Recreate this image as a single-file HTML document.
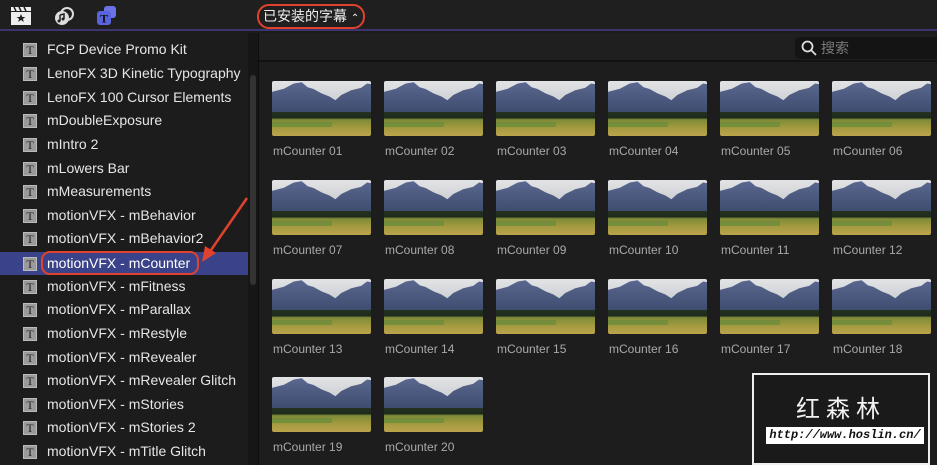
<!DOCTYPE html>
<html><head><meta charset="utf-8"><style>
*{margin:0;padding:0;box-sizing:border-box}
body{width:937px;height:465px;background:#1c1c1c;overflow:hidden;position:relative;font-family:"Liberation Sans","Noto Sans CJK SC",sans-serif}
.top{position:absolute;left:0;top:0;width:937px;height:31px;background:#1f1f1f;border-bottom:2px solid #3b3470}
.side{position:absolute;left:0;top:33px;width:248px;height:432px;background:#1c1c1c}
.sb{position:absolute;left:248px;top:33px;width:11px;height:432px;background:#161616;border-right:1px solid #0e0e0e}
.main{position:absolute;left:259px;top:33px;right:0;bottom:0;background:#1d1d1d}
.sstrip{position:absolute;left:259px;top:33px;right:0;height:29px;background:#1f1f1f;border-bottom:2px solid #111}
.search{position:absolute;left:795px;top:37px;width:150px;height:22px;background:#141414;border-radius:5px;color:#7a7a7a;font-size:14px;line-height:22px;padding-left:26px}
.row{position:absolute;left:0;width:248px;height:23.6px;color:#e6e6e6;font-size:14px;line-height:23.6px}
.row .ic{position:absolute;left:23px;top:5px;width:14px;height:14px;background:#9a9a9a;border:1px solid #bbb;color:#222;font-family:"Liberation Serif",serif;font-style:normal;font-size:12px;line-height:12px;text-align:center}
.row span{position:absolute;left:47px}
.sel{background:#3a4389}
.t{position:absolute;width:99px;height:55px;border-radius:2px;overflow:hidden;background:linear-gradient(#e2e3e5 0%,#c9ccd0 45%,#25321f 56%,#1f2a1d 67%,#7d8a38 70%,#a49a40 85%,#bba44c 100%)}
.t:before{content:"";position:absolute;left:0;top:0;width:99px;height:31px;background:linear-gradient(#5b6890,#3f4d70);clip-path:polygon(0 35%,12% 25%,22% 8%,30% 4%,36% 20%,42% 26%,50% 40%,58% 50%,64% 62%,70% 45%,80% 30%,90% 22%,96% 8%,100% 10%,100% 100%,0 100%)}
.t:after{content:"";position:absolute;left:0;top:41px;width:60px;height:5px;background:#5e8a3a;opacity:.6}
.l{position:absolute;color:#a9a9a9;font-size:12px}
.wm{position:absolute;left:752px;top:373px;width:178px;height:92px;background:#1a1a1a;border:2px solid #eee}
</style></head><body>
<div class="top">
<svg style="position:absolute;left:10px;top:6px" width="22" height="20" viewBox="0 0 22 20"><rect x="1" y="6" width="20" height="13" fill="#eee"/><path d="M1 1h20v4H1z" fill="#eee"/><path d="M4 1l2 4M9 1l2 4M14 1l2 4" stroke="#222" stroke-width="1.5"/><path d="M11 8l1.3 3h3l-2.4 2 1 3-2.9-2-2.9 2 1-3-2.4-2h3z" fill="#222"/></svg>
<svg style="position:absolute;left:53px;top:6px" width="22" height="20" viewBox="0 0 22 20"><circle cx="9" cy="12" r="7" fill="#ddd"/><circle cx="14" cy="8" r="6" fill="none" stroke="#ddd" stroke-width="2"/><path d="M7 9v6M7 9l4-1v5" stroke="#222" stroke-width="1.5" fill="none"/><circle cx="6" cy="15" r="1.5" fill="#222"/><circle cx="10" cy="13" r="1.5" fill="#222"/></svg>
<svg style="position:absolute;left:96px;top:5px" width="22" height="22" viewBox="0 0 22 22"><rect x="8" y="1" width="12" height="12" rx="3" fill="#6a72e6"/><rect x="1" y="6" width="14" height="14" rx="3" fill="#5863dc"/><text x="8" y="17.5" font-size="12" font-family="Liberation Serif" fill="#111" text-anchor="middle" font-weight="bold">T</text></svg>
<div style="position:absolute;left:257px;top:4px;width:108px;height:25px;border:2px solid #e0422e;border-radius:12px;color:#eee;font-size:14px;line-height:21px;padding-left:4px">已安装的字幕 <span style="font-size:10px">⌃</span></div>
</div>
<div class="side"></div>
<div class="sb"><div style="position:absolute;left:2px;top:42px;width:6px;height:210px;border-radius:3px;background:#333"></div></div>
<div class="main"></div>
<div class="sstrip"></div>
<div class="search">搜索</div>
<svg style="position:absolute;left:801px;top:40px" width="16" height="16" viewBox="0 0 16 16"><circle cx="6.5" cy="6.5" r="5" stroke="#ddd" stroke-width="1.8" fill="none"/><path d="M10 10l5 5" stroke="#ddd" stroke-width="1.8"/></svg>

<div class="row" style="top:38px"><i class="ic">T</i><span>FCP Device Promo Kit</span></div>
<div class="row" style="top:62px"><i class="ic">T</i><span>LenoFX 3D Kinetic Typography</span></div>
<div class="row" style="top:86px"><i class="ic">T</i><span>LenoFX 100 Cursor Elements</span></div>
<div class="row" style="top:109px"><i class="ic">T</i><span>mDoubleExposure</span></div>
<div class="row" style="top:133px"><i class="ic">T</i><span>mIntro 2</span></div>
<div class="row" style="top:157px"><i class="ic">T</i><span>mLowers Bar</span></div>
<div class="row" style="top:180px"><i class="ic">T</i><span>mMeasurements</span></div>
<div class="row" style="top:204px"><i class="ic">T</i><span>motionVFX - mBehavior</span></div>
<div class="row" style="top:227px"><i class="ic">T</i><span>motionVFX - mBehavior2</span></div>
<div class="row sel" style="top:252px;height:23px"><i class="ic">T</i><span style="color:#fff">motionVFX - mCounter</span></div>
<div style="position:absolute;left:41px;top:251px;width:158px;height:24px;border:2px solid #e0422e;border-radius:9px"></div>
<div class="row" style="top:275px"><i class="ic">T</i><span>motionVFX - mFitness</span></div>
<div class="row" style="top:298px"><i class="ic">T</i><span>motionVFX - mParallax</span></div>
<div class="row" style="top:322px"><i class="ic">T</i><span>motionVFX - mRestyle</span></div>
<div class="row" style="top:346px"><i class="ic">T</i><span>motionVFX - mRevealer</span></div>
<div class="row" style="top:369px"><i class="ic">T</i><span>motionVFX - mRevealer Glitch</span></div>
<div class="row" style="top:393px"><i class="ic">T</i><span>motionVFX - mStories</span></div>
<div class="row" style="top:416px"><i class="ic">T</i><span>motionVFX - mStories 2</span></div>
<div class="row" style="top:440px"><i class="ic">T</i><span>motionVFX - mTitle Glitch</span></div>
<svg style="position:absolute;left:195px;top:195px" width="60" height="70"><path d="M52 3L14 58" stroke="#e0422e" stroke-width="2.5"/><path d="M7 67l3-16 11 7z" fill="#e0422e"/></svg>

<div id="g"></div>
<script>
var xs=[272,384,496,608,720,832],ys=[81,180,279,377],h='';
for(var i=0;i<20;i++){var x=xs[i%6],y=ys[Math.floor(i/6)];var n=(i+1<10?'0':'')+(i+1);
h+='<div class="t" style="left:'+x+'px;top:'+y+'px"></div><div class="l" style="left:'+(x+1)+'px;top:'+(y+63)+'px">mCounter '+n+'</div>';}
document.getElementById('g').innerHTML=h;
</script>
<div class="wm">
<div style="position:absolute;left:0;right:0;top:14px;text-align:center;color:#f2f2f2;font-size:24px;letter-spacing:6px;font-family:'Noto Sans CJK SC',sans-serif">红森林</div>
<div style="position:absolute;left:12px;top:52px;width:158px;height:17px;background:#fff;color:#111;font-family:'Liberation Mono',monospace;font-style:italic;font-weight:bold;font-size:12px;line-height:17px;text-align:center">http://www.hoslin.cn/</div>
</div>
</body></html>
